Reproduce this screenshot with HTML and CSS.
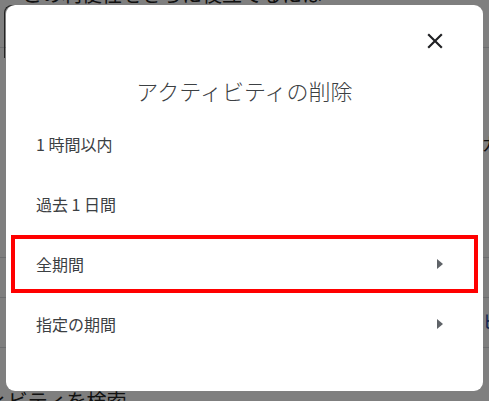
FILE: index.html
```html
<!DOCTYPE html>
<html lang="ja">
<head>
<meta charset="utf-8">
<title>アクティビティの削除</title>
<link rel="stylesheet" href="styles.css">
</head>
<body>
<div class="page">
  <div class="bg-top">この利便性をさらに役立てるには</div>
  <div class="bg-line l1"></div>
  <div class="bg-line l2"></div>
  <div class="bg-line l3"></div>
  <div class="bg-line l4"></div>
  <div class="bg-card"></div>
  <div class="bg-right r1">ガ</div>
  <div class="bg-right r2">ヒ</div>
  <div class="bg-bottom">アクティビティを検索</div>
</div>
<div class="overlay"></div>
<div class="dialog" role="dialog">
  <div class="dialog-head">
    <button class="close" aria-label="閉じる">
      <svg viewBox="0 0 24 24" width="26" height="26"><path d="M19 6.41L17.59 5 12 10.59 6.41 5 5 6.41 10.59 12 5 17.59 6.41 19 12 13.41 17.59 19 19 17.59 13.41 12z" fill="#202124"/></svg>
    </button>
  </div>
  <h1 class="title">アクティビティの削除</h1>
  <ul class="options">
    <li class="option"><span>1 時間以内</span></li>
    <li class="option"><span>過去 1 日間</span></li>
    <li class="option selected"><span>全期間</span><i class="arrow"></i></li>
    <li class="option"><span>指定の期間</span><i class="arrow"></i></li>
  </ul>
</div>
</body>
</html>
```
FILE: styles.css
```css
html, body {
  margin: 0;
  padding: 0;
}
body {
  width: 489px;
  height: 401px;
  overflow: hidden;
  position: relative;
  background: #ffffff;
  font-family: "Noto Sans CJK JP", "Noto Sans", sans-serif;
}
.page {
  position: absolute;
  inset: 0;
}
.bg-top {
  position: absolute;
  left: 22px;
  top: -16px;
  font-size: 20px;
  line-height: 20px;
  color: #222;
  white-space: nowrap;
}
.bg-line {
  position: absolute;
  left: 0;
  right: 0;
  height: 1px;
  background: #dadce0;
}
.l1 { top: 47px; }
.l2 { top: 257px; }
.l3 { top: 297px; }
.l4 { top: 347px; }
.bg-card {
  position: absolute;
  left: 4px;
  top: 5px;
  width: 40px;
  height: 52px;
  border-left: 1px solid #444;
  border-top: 1px solid #444;
  border-top-left-radius: 8px;
}
.bg-right {
  position: absolute;
  left: 482px;
  font-size: 18px;
  line-height: 20px;
  color: #222;
}
.r1 { top: 133px; }
.r2 { top: 311px; color: #1a47a0; }
.bg-bottom {
  position: absolute;
  left: -70px;
  top: 389px;
  font-size: 20px;
  line-height: 24px;
  color: #222;
  white-space: nowrap;
}
.overlay {
  position: absolute;
  inset: 0;
  background: rgba(0, 0, 0, 0.5);
}
.dialog {
  position: absolute;
  left: 6px;
  top: 5px;
  width: 477px;
  height: 386px;
  background: #fff;
  border-radius: 9px;
  box-sizing: border-box;
  padding: 23px 5px 0 5px;
  display: flex;
  flex-direction: column;
}
.dialog-head {
  display: flex;
  justify-content: flex-end;
  padding-right: 30px;
}
.close {
  width: 26px;
  height: 26px;
  padding: 0;
  border: 0;
  background: none;
  display: block;
}
.close svg { display: block; }
.title {
  margin: 21px 0 0 0;
  text-align: center;
  font-size: 22px;
  line-height: 30px;
  font-weight: 300;
  color: #3c4043;
}
.options {
  list-style: none;
  margin: 10px 0 0 0;
  padding: 0;
  display: flex;
  flex-direction: column;
  gap: 2px;
}
.option {
  height: 58px;
  box-sizing: border-box;
  border: 4px solid transparent;
  padding: 0 31px 0 21px;
  display: flex;
  align-items: center;
  justify-content: space-between;
  font-size: 16px;
  color: #3c4043;
}
.option.selected {
  border-color: #ff0000;
}
.arrow {
  width: 0;
  height: 0;
  border-left: 6px solid #5f6368;
  border-top: 5px solid transparent;
  border-bottom: 5px solid transparent;
}
```
